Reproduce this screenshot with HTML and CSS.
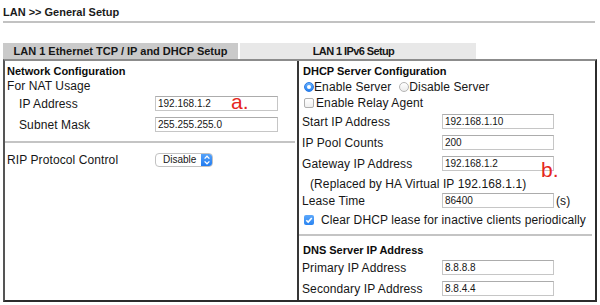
FILE: index.html
```html
<!DOCTYPE html>
<html lang="en">
<head>
    <meta charset="UTF-8">
    <title>LAN - General Setup</title>
    <link rel="stylesheet" href="styles.css">
</head>
<body>
    <div class="page">
        <h1 class="title">LAN &gt;&gt; General Setup</h1>

        <div class="tabs">
            <div class="tab active">LAN 1 Ethernet TCP / IP and DHCP Setup</div>
            <div class="tab tab-v6">LAN 1 IPv6 Setup</div>
        </div>

        <div class="panel">
            <div class="col col-left">
                <div class="row row-head">Network Configuration</div>
                <div class="row row-nat">For NAT Usage</div>
                <div class="row row-field indent">
                    <span class="label">IP Address</span>
                    <span class="input">192.168.1.2</span>
                    <span class="mark mark-a">a.</span>
                </div>
                <div class="row row-field indent">
                    <span class="label">Subnet Mask</span>
                    <span class="input">255.255.255.0</span>
                </div>
                <div class="sep"></div>
                <div class="row row-rip">
                    <span class="label">RIP Protocol Control</span>
                    <span class="select">Disable
                        <span class="select-arrows">
                            <svg width="12" height="14" viewBox="0 0 12 14"><path d="M3.6 5.6 L6 3.2 L8.4 5.6 M3.6 8.4 L6 10.8 L8.4 8.4" fill="none" stroke="#fff" stroke-width="1.3"/></svg>
                        </span>
                    </span>
                </div>
            </div>

            <div class="col col-right">
                <div class="row row-head">DHCP Server Configuration</div>
                <div class="row row-radio">
                    <span class="radio on"></span>Enable Server
                    <span class="radio radio-2"></span>Disable Server
                </div>
                <div class="row row-check">
                    <span class="check"></span>Enable Relay Agent
                </div>
                <div class="row row-field">
                    <span class="label">Start IP Address</span>
                    <span class="input">192.168.1.10</span>
                </div>
                <div class="row row-field">
                    <span class="label">IP Pool Counts</span>
                    <span class="input">200</span>
                </div>
                <div class="row row-field">
                    <span class="label">Gateway IP Address</span>
                    <span class="input">192.168.1.2</span>
                    <span class="mark mark-b">b.</span>
                </div>
                <div class="row row-note">(Replaced by HA Virtual IP 192.168.1.1)</div>
                <div class="row row-field">
                    <span class="label">Lease Time</span>
                    <span class="input">86400</span>
                    <span class="unit">(s)</span>
                </div>
                <div class="row row-check row-clear">
                    <span class="check on">
                        <svg width="10" height="10" viewBox="0 0 10 10"><path d="M2.3 5.2 L4.2 7.1 L7.8 3" fill="none" stroke="#fff" stroke-width="1.6"/></svg>
                    </span>Clear DHCP lease for inactive clients periodically
                </div>
                <div class="sep"></div>
                <div class="row row-head row-dns">DNS Server IP Address</div>
                <div class="row row-field">
                    <span class="label">Primary IP Address</span>
                    <span class="input">8.8.8.8</span>
                </div>
                <div class="row row-field">
                    <span class="label">Secondary IP Address</span>
                    <span class="input">8.8.4.4</span>
                </div>
            </div>
        </div>
    </div>
</body>
</html>
```

FILE: styles.css
```css
* {
    margin: 0;
    padding: 0;
    box-sizing: border-box;
}

body {
    font-family: 'Liberation Sans', Arial, sans-serif;
    font-size: 12px;
    line-height: 16px;
    color: #161616;
    background-color: #fff;
}

.page {
    padding: 0 3px;
}

.title {
    font-size: 11px;
    font-weight: bold;
    line-height: 14px;
    color: #1a1a1a;
    padding: 5px 0 2px;
    margin-right: 2px;
    border-bottom: 2px solid #c2c2c2;
}

.tabs {
    display: flex;
    gap: 2px;
    margin-top: 20px;
}

.tab {
    width: 236px;
    height: 16px;
    line-height: 16px;
    text-align: center;
    font-size: 11px;
    font-weight: bold;
    background-color: #e8e8e8;
}

.tab.active {
    width: 235px;
    background-color: #cacaca;
}

.tab-v6 {
    letter-spacing: -0.6px;
    padding-right: 9px;
}

.panel {
    display: flex;
    height: 243px;
    border-top: 2px solid #8c8c8c;
    border-right: 2px solid #2c2c2c;
    border-bottom: 2px solid #2c2c2c;
    border-left: 2px solid #555;
}

.col {
    padding-top: 2px;
}

.col-left {
    width: 294px;
    border-right: 2px solid #363636;
}

.col-right {
    flex: 1;
}

.row {
    display: flex;
    align-items: center;
    position: relative;
    white-space: nowrap;
    letter-spacing: 0.1px;
}

.row-head {
    height: 16px;
    font-size: 11px;
    font-weight: bold;
    letter-spacing: 0;
    color: #0c0c0c;
}

.col-left .row {
    padding-left: 2px;
}

.col-left .row.indent {
    padding-left: 14px;
}

.col-left .label {
    width: 148px;
}

.col-left .indent .label {
    width: 136px;
}

.row-nat {
    height: 14px;
}

.row-field {
    height: 21px;
}

.row-rip {
    height: 22px;
}

.col-right .row {
    padding-left: 3px;
}

.col-right .row-head {
    padding-left: 4px;
}

.col-right .label {
    width: 140px;
}

.row-radio {
    height: 15px;
}

.col-right .row-radio,
.col-right .row-check {
    padding-left: 5px;
}

.row-check {
    height: 17px;
}

.row-note {
    height: 16px;
    padding-top: 3px;
}

.col-right .row-note {
    padding-left: 11px;
}

.row-dns {
    height: 15px;
}

.input {
    height: 15px;
    line-height: 13px;
    font-size: 10px;
    letter-spacing: 0;
    padding-left: 2px;
    background-color: #fff;
    border: 1px solid #c6c6c6;
    border-top-color: #acacac;
}

.col-left .input {
    width: 123px;
}

.col-right .input {
    width: 112px;
}

.unit {
    margin-left: 2px;
}

.sep {
    height: 14px;
    margin-right: 2px;
    position: relative;
}

.sep::after {
    content: '';
    position: absolute;
    left: 0;
    right: 0;
    top: 6px;
    height: 2px;
    background-color: #c4c4c4;
}

.col-right .sep {
    margin-right: 3px;
}

.select {
    display: flex;
    align-items: center;
    width: 58px;
    height: 14px;
    font-size: 10px;
    line-height: 12px;
    letter-spacing: 0;
    padding-left: 7px;
    background-color: #fff;
    border: 1px solid #c2c2c2;
    border-radius: 4px;
    overflow: hidden;
}

.select-arrows {
    display: flex;
    margin-left: auto;
    width: 12px;
    height: 14px;
    margin-top: -1px;
    margin-bottom: -1px;
    margin-right: -1px;
    background: linear-gradient(#5aa6fb, #1d78ef);
    border-radius: 0 4px 4px 0;
}

.radio {
    display: inline-block;
    width: 10px;
    height: 10px;
    border-radius: 50%;
    border: 1px solid #b4b4b4;
    background: linear-gradient(#fff, #ececec);
    position: relative;
}

.radio.on {
    border-color: #2b7be6;
    background: linear-gradient(#68b0fb, #2581f1);
}

.radio.on::after {
    content: '';
    position: absolute;
    left: 2px;
    top: 2px;
    width: 4px;
    height: 4px;
    border-radius: 50%;
    background-color: #fff;
}

.radio-2 {
    margin-left: 8px;
}

.check {
    display: inline-flex;
    width: 10px;
    height: 10px;
    margin-right: 2px;
    border: 1px solid #b0b0b0;
    border-radius: 2px;
    background: linear-gradient(#fff, #efefef);
}

.check.on {
    margin-right: 7px;
    border: none;
    background: linear-gradient(#5ca8fb, #2a84f1);
}

.mark {
    position: absolute;
    font-size: 21px;
    line-height: 21px;
    letter-spacing: 0;
    color: #e52620;
}

.mark-a {
    left: 226px;
    top: -2px;
}

.mark-b {
    left: 242px;
    top: 6px;
}
```
